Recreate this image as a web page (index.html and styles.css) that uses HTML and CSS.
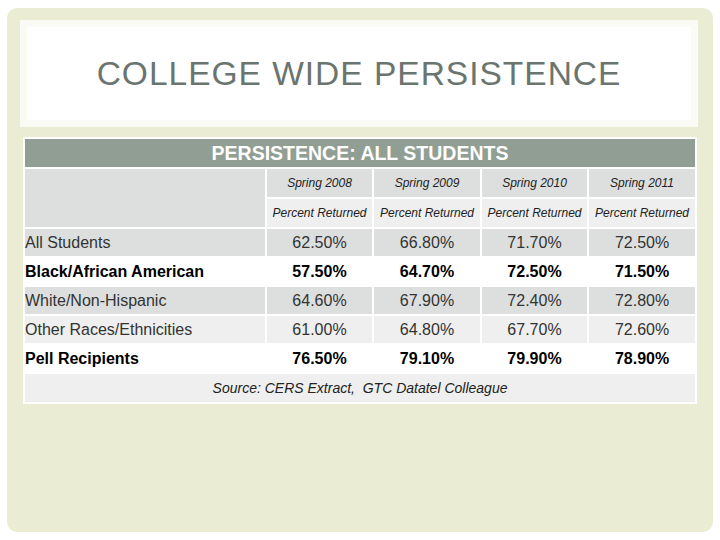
FILE: index.html
```html
<!DOCTYPE html>
<html>
<head>
<meta charset="utf-8">
<link rel="stylesheet" href="styles.css">
</head>
<body>
<div class="slide">
  <div class="title-box">
    <h1 class="title">COLLEGE WIDE PERSISTENCE</h1>
  </div>
  <table class="data">
    <colgroup>
      <col class="c-label">
      <col class="c-a">
      <col class="c-b">
      <col class="c-a">
      <col class="c-b">
    </colgroup>
    <tr class="r-head"><th colspan="5">PERSISTENCE: ALL STUDENTS</th></tr>
    <tr class="r-sub r-spring">
      <td class="blank" rowspan="2"></td>
      <td>Spring 2008</td><td>Spring 2009</td><td>Spring 2010</td><td>Spring 2011</td>
    </tr>
    <tr class="r-sub r-pct">
      <td>Percent Returned</td><td>Percent Returned</td><td>Percent Returned</td><td>Percent Returned</td>
    </tr>
    <tr class="r-data gray">
      <td class="label">All Students</td><td>62.50%</td><td>66.80%</td><td>71.70%</td><td>72.50%</td>
    </tr>
    <tr class="r-data white bold">
      <td class="label">Black/African American</td><td>57.50%</td><td>64.70%</td><td>72.50%</td><td>71.50%</td>
    </tr>
    <tr class="r-data gray">
      <td class="label">White/Non-Hispanic</td><td>64.60%</td><td>67.90%</td><td>72.40%</td><td>72.80%</td>
    </tr>
    <tr class="r-data light">
      <td class="label">Other Races/Ethnicities</td><td>61.00%</td><td>64.80%</td><td>67.70%</td><td>72.60%</td>
    </tr>
    <tr class="r-data white bold">
      <td class="label">Pell Recipients</td><td>76.50%</td><td>79.10%</td><td>79.90%</td><td>78.90%</td>
    </tr>
    <tr class="r-source">
      <td colspan="5">Source: CERS Extract,&nbsp; GTC Datatel Colleague</td>
    </tr>
  </table>
</div>
</body>
</html>
```

FILE: styles.css
```css
html, body {
  margin: 0;
  padding: 0;
  background: #ffffff;
}

body {
  font-family: "Liberation Sans", Arial, sans-serif;
}

.slide {
  margin: 8px 7px;
  width: 706px;
  height: 524px;
  box-sizing: border-box;
  background: #ebecd4;
  border-radius: 10px;
  padding: 12px 15px 0 13px;
}

.title-box {
  height: 107px;
  box-sizing: border-box;
  background: #ffffff;
  border: 7px solid #fbfbf5;
  display: flex;
  align-items: center;
  justify-content: center;
}

.title {
  margin: 0;
  font-weight: normal;
  font-size: 33.5px;
  letter-spacing: 1px;
  color: #6b7570;
}

.data {
  margin: 10px 1px 0 3px;
  width: 674px;
  border-collapse: separate;
  border-spacing: 2px;
  background: #ffffff;
  table-layout: fixed;
  color: #333333;
}

.c-label { width: 240px; }
.c-a { width: 105px; }
.c-b { width: 106px; }

.data td, .data th {
  padding: 0;
  text-align: center;
}

.r-head th {
  height: 28px;
  background: #919e94;
  color: #ffffff;
  font-weight: bold;
  font-size: 19.5px;
}

.r-sub td {
  height: 28px;
  font-size: 12px;
  font-style: italic;
  color: #222222;
}

.r-spring td { background: #dcdfde; }
.r-pct td { background: #eeefee; }
.r-sub td.blank { background: #dcdfde; }

.r-data td {
  height: 27px;
  font-size: 16px;
}

.r-data td.label {
  text-align: left;
}

.gray td { background: #dcdfde; }
.light td { background: #eeefee; }
.white td { background: #ffffff; }
.bold td { font-weight: bold; color: #000000; }

.r-source td {
  height: 28px;
  background: #eeefee;
  font-size: 14px;
  font-style: italic;
  color: #222222;
}
```
